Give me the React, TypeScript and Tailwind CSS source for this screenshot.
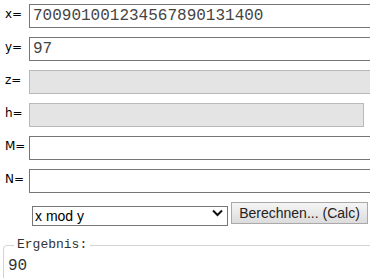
import React from "react";

const fields: { label: string; value: string; disabled?: boolean; short?: boolean }[] = [
  { label: "x=", value: "700901001234567890131400" },
  { label: "y=", value: "97" },
  { label: "z=", value: "", disabled: true },
  { label: "h=", value: "", disabled: true, short: true },
  { label: "M=", value: "" },
  { label: "N=", value: "" },
];

export default function App() {
  return (
    <div className="w-[370px] h-[278px] overflow-hidden bg-white pt-[4px]">
      {fields.map((f) => (
        <div key={f.label} className="flex items-start h-[24px] mb-[9px]">
          <label className="w-[29px] shrink-0 pl-[5px] pt-[2px] leading-[16px] text-[12px] text-black font-['DejaVu_Sans',sans-serif]">
            {f.label}
          </label>
          <input
            readOnly
            disabled={f.disabled}
            value={f.value}
            className={
              f.disabled
                ? f.short
                  ? "h-[24px] w-[335px] shrink-0 border border-[#b9b9b9] bg-[#e4e4e4] px-[3px] outline-none"
                  : "h-[24px] w-[360px] shrink-0 border border-[#b9b9b9] bg-[#e4e4e4] px-[3px] outline-none"
                : "h-[24px] w-[360px] shrink-0 border border-[#767676] bg-white px-[3px] text-[16px] text-[#444] outline-none font-['Liberation_Mono',monospace]"
            }
          />
        </div>
      ))}
      <div className="flex items-center ml-[32px] mt-[1px] h-[22px]">
        <div className="relative w-[196px] h-[20px] shrink-0">
          <select className="appearance-none w-full h-full border border-[#767676] bg-white pl-[2px] text-[14px] leading-[18px] text-black outline-none rounded-none font-['Liberation_Sans',sans-serif]">
            <option>x mod y</option>
          </select>
          <svg className="absolute right-[5px] top-[6px] pointer-events-none" width="11" height="8" viewBox="0 0 11 8">
            <path d="M1 1.5 L5.5 6 L10 1.5" fill="none" stroke="#111" strokeWidth="2" />
          </svg>
        </div>
        <button className="ml-[3px] w-[137px] h-[22px] shrink-0 border border-[#a9a9a9] bg-gradient-to-b from-[#f5f5f5] to-[#dcdcdc] text-[14px] leading-[20px] text-[#222] font-['Liberation_Sans',sans-serif]">
          Berechnen... (Calc)
        </button>
      </div>
      <fieldset className="ml-[3px] mt-[14px] w-[400px] border border-[#d4d4d4] rounded-tl-[4px] pl-[4px] pb-[4px]">
        <legend className="ml-[6px] px-[3px] text-[13px] leading-[14px] text-[#333] font-['Liberation_Mono',monospace]">
          Ergebnis:
        </legend>
        <div className="pt-[4px] text-[16px] leading-[20px] text-[#333] font-['Liberation_Mono',monospace]">90</div>
      </fieldset>
    </div>
  );
}
